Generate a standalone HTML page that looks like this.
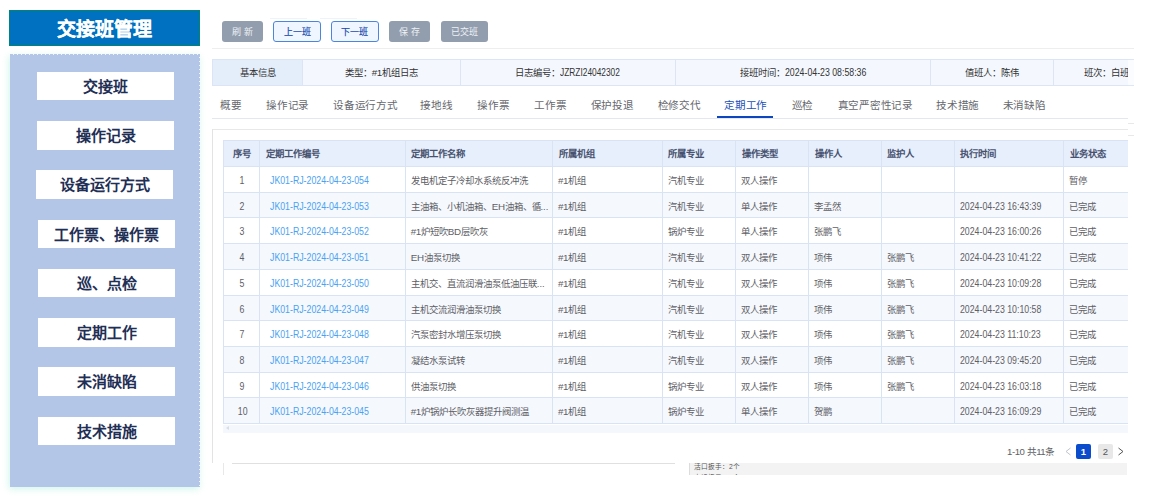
<!DOCTYPE html><html lang="zh-CN"><head><meta charset="utf-8"><style>
*{margin:0;padding:0;box-sizing:border-box}
html,body{width:1149px;height:499px;overflow:hidden;background:#fff;font-family:"Liberation Sans",sans-serif}
.a{position:absolute}
.hdr{left:9px;top:10px;width:191px;height:36px;background:#0070c0;border:1px solid #00856e;color:#fff;font-weight:bold;font-size:19px;line-height:37.6px;text-align:center;letter-spacing:0px;-webkit-text-stroke:0.25px #fff}
.panel{left:10px;top:54px;width:190px;height:433px;background:#b4c6e7;box-shadow:-1px 2px 7px rgba(150,235,210,.45)}
.dt{left:10px;top:54px;width:190px;height:1px;background:repeating-linear-gradient(to right,#b4c6e7 0 3px,#f4f6fb 3px 4px)}
.dr{left:199px;top:54px;width:1px;height:433px;background:repeating-linear-gradient(to bottom,#b4c6e7 0 3px,#f4f6fb 3px 4px)}
.nav{width:137px;background:#fff;color:#1f2f55;font-weight:bold;font-size:15px;line-height:29.5px;text-align:center}
.btn{top:21.2px;height:20.9px;border-radius:3px;font-size:9px;line-height:23.3px;text-align:center}
.g{background:#929eae;color:#eef1f5}
.o{background:#f0f6ff;border:1px solid #4a86dc;color:#1a4cb0;line-height:21.3px;-webkit-text-stroke:0.2px #1a4cb0}
.info{left:212px;top:59px;width:916px;height:26.5px;background:#f4f8fe;border:1px solid #dbe5f5;border-right:none;overflow:hidden}
.ic{top:0;height:24.5px;line-height:26.5px;font-size:9.4px;color:#333;text-align:center;border-right:1px solid #dbe5f5;white-space:nowrap}
.tab{top:98.3px;font-size:10.55px;letter-spacing:-0.25px;line-height:14px;color:#66686e;white-space:nowrap}
.tab.act{color:#1a50b8}
.hl{background:#e4e7ed;height:1px}
.cell{white-space:nowrap;overflow:hidden;font-size:9.4px;color:#5e6066;padding-left:4.5px}
.L{font-size:9.8px;letter-spacing:-0.45px}
.LS{display:inline-block;font-size:10.2px;transform:scaleX(.86);transform-origin:0 50%}
.LC{display:inline-block;font-size:10.2px;transform:scaleX(.86);transform-origin:50% 50%}
.th{font-weight:bold;color:#485270;padding-left:5.2px}
</style></head><body>
<div class="a hdr">交接班管理</div>
<div class="a panel"></div><div class="a dt"></div><div class="a dr"></div>
<div class="a nav" style="left:37px;top:72px;height:28px;line-height:29px">交接班</div>
<div class="a nav" style="left:37px;top:121px;height:29px;line-height:30px">操作记录</div>
<div class="a nav" style="left:36px;top:170px;height:29px;line-height:30px">设备运行方式</div>
<div class="a nav" style="left:38px;top:220px;height:28px;line-height:29px">工作票、操作票</div>
<div class="a nav" style="left:38px;top:269px;height:28px;line-height:29px">巡、点检</div>
<div class="a nav" style="left:38px;top:318px;height:29px;line-height:30px">定期工作</div>
<div class="a nav" style="left:38px;top:367px;height:29px;line-height:30px">未消缺陷</div>
<div class="a nav" style="left:38px;top:417px;height:28px;line-height:29px">技术措施</div>
<div class="a btn g" style="left:222px;width:41px">刷 新</div>
<div class="a btn o" style="left:273px;width:48px">上一班</div>
<div class="a btn o" style="left:331px;width:47.60000000000002px">下一班</div>
<div class="a btn g" style="left:389px;width:41px">保 存</div>
<div class="a btn g" style="left:441px;width:47px">已交班</div>
<div class="a" style="left:269.5px;top:18px;width:37.5px;height:1px;background:#eef3fa"></div><div class="a" style="left:319.5px;top:18px;width:37.5px;height:1px;background:#eef3fa"></div>
<div class="a hl" style="left:212px;top:48px;width:922px;background:#eeeeee"></div>
<div class="a info">
<div class="a ic" style="left:-0.4000000000000057px;width:90.39999999999998px;background:#e4eefb;"><span class="a" style="left:27.599999999999987px;top:0">基本信息</span></div>
<div class="a ic" style="left:89.99999999999997px;width:158.3px;"><span class="a" style="left:41.70000000000001px;top:0">类型：<span class="L">#1</span>机组日志</span></div>
<div class="a ic" style="left:248.29999999999998px;width:214.7px;"><span class="a" style="left:54.20000000000001px;top:0">日志编号：<span class="LS" style="transform:scaleX(.82)">JZRZI24042302</span></span></div>
<div class="a ic" style="left:463.0px;width:255.20000000000005px;"><span class="a" style="left:63.50000000000002px;top:0">接班时间：<span class="LS">2024-04-23 08:58:36</span></span></div>
<div class="a ic" style="left:718.2px;width:122.39999999999998px;"><span class="a" style="left:33.799999999999976px;top:0">值班人：陈伟</span></div>
<div class="a ic" style="left:840.6px;width:105px;border-right:none;"><span class="a" style="left:30.100000000000044px;top:0">班次：白班</span></div>
</div>
<div class="a" style="left:1128px;top:59px;width:6px;height:26.5px;border-top:1px solid #dde6f5;border-bottom:1px solid #dde6f5;background:#fbfcff"></div>
<div class="a" style="left:1128px;top:123px;width:6px;height:1px;background:#e8e8e8"></div>
<div class="a" style="left:1128px;top:135px;width:6px;height:1px;background:#e8e8e8"></div>
<div class="a tab" style="left:220px">概要</div>
<div class="a tab" style="left:266px">操作记录</div>
<div class="a tab" style="left:333px">设备运行方式</div>
<div class="a tab" style="left:420px">接地线</div>
<div class="a tab" style="left:477px">操作票</div>
<div class="a tab" style="left:534px">工作票</div>
<div class="a tab" style="left:590.7px">保护投退</div>
<div class="a tab" style="left:657.7px">检修交代</div>
<div class="a tab act" style="left:724px">定期工作</div>
<div class="a tab" style="left:791.5px">巡检</div>
<div class="a tab" style="left:837.5px">真空严密性记录</div>
<div class="a tab" style="left:936px">技术措施</div>
<div class="a tab" style="left:1002.5px">未消缺陷</div>
<div class="a" style="left:717px;top:116px;width:56px;height:2.6px;background:#0d47c0"></div>
<div class="a hl" style="left:212px;top:118px;width:916px"></div>
<div class="a hl" style="left:212px;top:129px;width:916px;background:#e8e8e8"></div>
<div class="a" style="left:212px;top:129px;width:1px;height:334px;background:#e3e3e3"></div>
<div class="a" style="left:223px;top:140px;width:904.5px;height:284.2px;border:1px solid #d8e3f4;border-right:none;overflow:hidden">
<div class="a" style="left:0;top:0;width:904.5px;height:25px;background:#e6effb"></div>
<div class="a" style="left:0;top:25.0px;width:904.5px;height:25.72px;background:#ffffff;border-top:1px solid #d8e3f4"></div>
<div class="a" style="left:0;top:50.72px;width:904.5px;height:25.72px;background:#f5f8fd;border-top:1px solid #d8e3f4"></div>
<div class="a" style="left:0;top:76.44px;width:904.5px;height:25.72px;background:#ffffff;border-top:1px solid #d8e3f4"></div>
<div class="a" style="left:0;top:102.16px;width:904.5px;height:25.72px;background:#f5f8fd;border-top:1px solid #d8e3f4"></div>
<div class="a" style="left:0;top:127.88px;width:904.5px;height:25.72px;background:#ffffff;border-top:1px solid #d8e3f4"></div>
<div class="a" style="left:0;top:153.6px;width:904.5px;height:25.72px;background:#f5f8fd;border-top:1px solid #d8e3f4"></div>
<div class="a" style="left:0;top:179.32px;width:904.5px;height:25.72px;background:#ffffff;border-top:1px solid #d8e3f4"></div>
<div class="a" style="left:0;top:205.04px;width:904.5px;height:25.72px;background:#f5f8fd;border-top:1px solid #d8e3f4"></div>
<div class="a" style="left:0;top:230.76px;width:904.5px;height:25.72px;background:#ffffff;border-top:1px solid #d8e3f4"></div>
<div class="a" style="left:0;top:256.48px;width:904.5px;height:25.72px;background:#f5f8fd;border-top:1px solid #d8e3f4"></div>
<div class="a" style="left:35.0px;top:0;width:1px;height:282.2px;background:#d8e3f4"></div>
<div class="a" style="left:180.8px;top:0;width:1px;height:282.2px;background:#d8e3f4"></div>
<div class="a" style="left:328.0px;top:0;width:1px;height:282.2px;background:#d8e3f4"></div>
<div class="a" style="left:437.5px;top:0;width:1px;height:282.2px;background:#d8e3f4"></div>
<div class="a" style="left:511.0px;top:0;width:1px;height:282.2px;background:#d8e3f4"></div>
<div class="a" style="left:583.9px;top:0;width:1px;height:282.2px;background:#d8e3f4"></div>
<div class="a" style="left:656.8px;top:0;width:1px;height:282.2px;background:#d8e3f4"></div>
<div class="a" style="left:729.8px;top:0;width:1px;height:282.2px;background:#d8e3f4"></div>
<div class="a" style="left:839.2px;top:0;width:1px;height:282.2px;background:#d8e3f4"></div>
<div class="a cell th" style="left:0px;top:0;width:36.5px;height:25px;line-height:26px;text-align:center;padding-left:0;">序号</div>
<div class="a cell th" style="left:36.5px;top:0;width:145.8px;height:25px;line-height:26px;">定期工作编号</div>
<div class="a cell th" style="left:182.3px;top:0;width:147.2px;height:25px;line-height:26px;">定期工作名称</div>
<div class="a cell th" style="left:329.5px;top:0;width:109.5px;height:25px;line-height:26px;">所属机组</div>
<div class="a cell th" style="left:439px;top:0;width:73.5px;height:25px;line-height:26px;">所属专业</div>
<div class="a cell th" style="left:512.5px;top:0;width:72.89999999999998px;height:25px;line-height:26px;">操作类型</div>
<div class="a cell th" style="left:585.4px;top:0;width:72.89999999999998px;height:25px;line-height:26px;">操作人</div>
<div class="a cell th" style="left:658.3px;top:0;width:73.0px;height:25px;line-height:26px;">监护人</div>
<div class="a cell th" style="left:731.3px;top:0;width:109.40000000000009px;height:25px;line-height:26px;">执行时间</div>
<div class="a cell th" style="left:840.7px;top:0;width:63.799999999999955px;height:25px;line-height:26px;">业务状态</div>
<div class="a cell" style="left:0px;top:25.0px;width:36.5px;height:25.72px;line-height:29.119999999999997px;text-align:center;padding-left:0;"><span class="LC">1</span></div>
<div class="a cell" style="left:36.5px;top:25.0px;width:145.8px;height:25.72px;line-height:29.119999999999997px;color:#4aa2f2;padding-left:9px;"><span class="LS">JK01-RJ-2024-04-23-054</span></div>
<div class="a cell" style="left:182.3px;top:25.0px;width:147.2px;height:25.72px;line-height:29.119999999999997px;">发电机定子冷却水系统反冲洗</div>
<div class="a cell" style="left:329.5px;top:25.0px;width:109.5px;height:25.72px;line-height:29.119999999999997px;"><span class="L">#1</span>机组</div>
<div class="a cell" style="left:439px;top:25.0px;width:73.5px;height:25.72px;line-height:29.119999999999997px;">汽机专业</div>
<div class="a cell" style="left:512.5px;top:25.0px;width:72.89999999999998px;height:25.72px;line-height:29.119999999999997px;">双人操作</div>
<div class="a cell" style="left:840.7px;top:25.0px;width:63.799999999999955px;height:25.72px;line-height:29.119999999999997px;">暂停</div>
<div class="a cell" style="left:0px;top:50.72px;width:36.5px;height:25.72px;line-height:29.119999999999997px;text-align:center;padding-left:0;"><span class="LC">2</span></div>
<div class="a cell" style="left:36.5px;top:50.72px;width:145.8px;height:25.72px;line-height:29.119999999999997px;color:#4aa2f2;padding-left:9px;"><span class="LS">JK01-RJ-2024-04-23-053</span></div>
<div class="a cell" style="left:182.3px;top:50.72px;width:147.2px;height:25.72px;line-height:29.119999999999997px;">主油箱、小机油箱、<span class="L">EH</span>油箱、循...</div>
<div class="a cell" style="left:329.5px;top:50.72px;width:109.5px;height:25.72px;line-height:29.119999999999997px;"><span class="L">#1</span>机组</div>
<div class="a cell" style="left:439px;top:50.72px;width:73.5px;height:25.72px;line-height:29.119999999999997px;">汽机专业</div>
<div class="a cell" style="left:512.5px;top:50.72px;width:72.89999999999998px;height:25.72px;line-height:29.119999999999997px;">单人操作</div>
<div class="a cell" style="left:585.4px;top:50.72px;width:72.89999999999998px;height:25.72px;line-height:29.119999999999997px;">李孟然</div>
<div class="a cell" style="left:731.3px;top:50.72px;width:109.40000000000009px;height:25.72px;line-height:29.119999999999997px;"><span class="LS">2024-04-23 16:43:39</span></div>
<div class="a cell" style="left:840.7px;top:50.72px;width:63.799999999999955px;height:25.72px;line-height:29.119999999999997px;">已完成</div>
<div class="a cell" style="left:0px;top:76.44px;width:36.5px;height:25.72px;line-height:29.119999999999997px;text-align:center;padding-left:0;"><span class="LC">3</span></div>
<div class="a cell" style="left:36.5px;top:76.44px;width:145.8px;height:25.72px;line-height:29.119999999999997px;color:#4aa2f2;padding-left:9px;"><span class="LS">JK01-RJ-2024-04-23-052</span></div>
<div class="a cell" style="left:182.3px;top:76.44px;width:147.2px;height:25.72px;line-height:29.119999999999997px;"><span class="L">#1</span>炉短吹<span class="L">BD</span>层吹灰</div>
<div class="a cell" style="left:329.5px;top:76.44px;width:109.5px;height:25.72px;line-height:29.119999999999997px;"><span class="L">#1</span>机组</div>
<div class="a cell" style="left:439px;top:76.44px;width:73.5px;height:25.72px;line-height:29.119999999999997px;">锅炉专业</div>
<div class="a cell" style="left:512.5px;top:76.44px;width:72.89999999999998px;height:25.72px;line-height:29.119999999999997px;">单人操作</div>
<div class="a cell" style="left:585.4px;top:76.44px;width:72.89999999999998px;height:25.72px;line-height:29.119999999999997px;">张鹏飞</div>
<div class="a cell" style="left:731.3px;top:76.44px;width:109.40000000000009px;height:25.72px;line-height:29.119999999999997px;"><span class="LS">2024-04-23 16:00:26</span></div>
<div class="a cell" style="left:840.7px;top:76.44px;width:63.799999999999955px;height:25.72px;line-height:29.119999999999997px;">已完成</div>
<div class="a cell" style="left:0px;top:102.16px;width:36.5px;height:25.72px;line-height:29.119999999999997px;text-align:center;padding-left:0;"><span class="LC">4</span></div>
<div class="a cell" style="left:36.5px;top:102.16px;width:145.8px;height:25.72px;line-height:29.119999999999997px;color:#4aa2f2;padding-left:9px;"><span class="LS">JK01-RJ-2024-04-23-051</span></div>
<div class="a cell" style="left:182.3px;top:102.16px;width:147.2px;height:25.72px;line-height:29.119999999999997px;"><span class="L">EH</span>油泵切换</div>
<div class="a cell" style="left:329.5px;top:102.16px;width:109.5px;height:25.72px;line-height:29.119999999999997px;"><span class="L">#1</span>机组</div>
<div class="a cell" style="left:439px;top:102.16px;width:73.5px;height:25.72px;line-height:29.119999999999997px;">汽机专业</div>
<div class="a cell" style="left:512.5px;top:102.16px;width:72.89999999999998px;height:25.72px;line-height:29.119999999999997px;">双人操作</div>
<div class="a cell" style="left:585.4px;top:102.16px;width:72.89999999999998px;height:25.72px;line-height:29.119999999999997px;">项伟</div>
<div class="a cell" style="left:658.3px;top:102.16px;width:73.0px;height:25.72px;line-height:29.119999999999997px;">张鹏飞</div>
<div class="a cell" style="left:731.3px;top:102.16px;width:109.40000000000009px;height:25.72px;line-height:29.119999999999997px;"><span class="LS">2024-04-23 10:41:22</span></div>
<div class="a cell" style="left:840.7px;top:102.16px;width:63.799999999999955px;height:25.72px;line-height:29.119999999999997px;">已完成</div>
<div class="a cell" style="left:0px;top:127.88px;width:36.5px;height:25.72px;line-height:29.119999999999997px;text-align:center;padding-left:0;"><span class="LC">5</span></div>
<div class="a cell" style="left:36.5px;top:127.88px;width:145.8px;height:25.72px;line-height:29.119999999999997px;color:#4aa2f2;padding-left:9px;"><span class="LS">JK01-RJ-2024-04-23-050</span></div>
<div class="a cell" style="left:182.3px;top:127.88px;width:147.2px;height:25.72px;line-height:29.119999999999997px;">主机交、直流润滑油泵低油压联...</div>
<div class="a cell" style="left:329.5px;top:127.88px;width:109.5px;height:25.72px;line-height:29.119999999999997px;"><span class="L">#1</span>机组</div>
<div class="a cell" style="left:439px;top:127.88px;width:73.5px;height:25.72px;line-height:29.119999999999997px;">汽机专业</div>
<div class="a cell" style="left:512.5px;top:127.88px;width:72.89999999999998px;height:25.72px;line-height:29.119999999999997px;">双人操作</div>
<div class="a cell" style="left:585.4px;top:127.88px;width:72.89999999999998px;height:25.72px;line-height:29.119999999999997px;">项伟</div>
<div class="a cell" style="left:658.3px;top:127.88px;width:73.0px;height:25.72px;line-height:29.119999999999997px;">张鹏飞</div>
<div class="a cell" style="left:731.3px;top:127.88px;width:109.40000000000009px;height:25.72px;line-height:29.119999999999997px;"><span class="LS">2024-04-23 10:09:28</span></div>
<div class="a cell" style="left:840.7px;top:127.88px;width:63.799999999999955px;height:25.72px;line-height:29.119999999999997px;">已完成</div>
<div class="a cell" style="left:0px;top:153.6px;width:36.5px;height:25.72px;line-height:29.119999999999997px;text-align:center;padding-left:0;"><span class="LC">6</span></div>
<div class="a cell" style="left:36.5px;top:153.6px;width:145.8px;height:25.72px;line-height:29.119999999999997px;color:#4aa2f2;padding-left:9px;"><span class="LS">JK01-RJ-2024-04-23-049</span></div>
<div class="a cell" style="left:182.3px;top:153.6px;width:147.2px;height:25.72px;line-height:29.119999999999997px;">主机交流润滑油泵切换</div>
<div class="a cell" style="left:329.5px;top:153.6px;width:109.5px;height:25.72px;line-height:29.119999999999997px;"><span class="L">#1</span>机组</div>
<div class="a cell" style="left:439px;top:153.6px;width:73.5px;height:25.72px;line-height:29.119999999999997px;">汽机专业</div>
<div class="a cell" style="left:512.5px;top:153.6px;width:72.89999999999998px;height:25.72px;line-height:29.119999999999997px;">双人操作</div>
<div class="a cell" style="left:585.4px;top:153.6px;width:72.89999999999998px;height:25.72px;line-height:29.119999999999997px;">项伟</div>
<div class="a cell" style="left:658.3px;top:153.6px;width:73.0px;height:25.72px;line-height:29.119999999999997px;">张鹏飞</div>
<div class="a cell" style="left:731.3px;top:153.6px;width:109.40000000000009px;height:25.72px;line-height:29.119999999999997px;"><span class="LS">2024-04-23 10:10:58</span></div>
<div class="a cell" style="left:840.7px;top:153.6px;width:63.799999999999955px;height:25.72px;line-height:29.119999999999997px;">已完成</div>
<div class="a cell" style="left:0px;top:179.32px;width:36.5px;height:25.72px;line-height:29.119999999999997px;text-align:center;padding-left:0;"><span class="LC">7</span></div>
<div class="a cell" style="left:36.5px;top:179.32px;width:145.8px;height:25.72px;line-height:29.119999999999997px;color:#4aa2f2;padding-left:9px;"><span class="LS">JK01-RJ-2024-04-23-048</span></div>
<div class="a cell" style="left:182.3px;top:179.32px;width:147.2px;height:25.72px;line-height:29.119999999999997px;">汽泵密封水增压泵切换</div>
<div class="a cell" style="left:329.5px;top:179.32px;width:109.5px;height:25.72px;line-height:29.119999999999997px;"><span class="L">#1</span>机组</div>
<div class="a cell" style="left:439px;top:179.32px;width:73.5px;height:25.72px;line-height:29.119999999999997px;">汽机专业</div>
<div class="a cell" style="left:512.5px;top:179.32px;width:72.89999999999998px;height:25.72px;line-height:29.119999999999997px;">双人操作</div>
<div class="a cell" style="left:585.4px;top:179.32px;width:72.89999999999998px;height:25.72px;line-height:29.119999999999997px;">项伟</div>
<div class="a cell" style="left:658.3px;top:179.32px;width:73.0px;height:25.72px;line-height:29.119999999999997px;">张鹏飞</div>
<div class="a cell" style="left:731.3px;top:179.32px;width:109.40000000000009px;height:25.72px;line-height:29.119999999999997px;"><span class="LS">2024-04-23 11:10:23</span></div>
<div class="a cell" style="left:840.7px;top:179.32px;width:63.799999999999955px;height:25.72px;line-height:29.119999999999997px;">已完成</div>
<div class="a cell" style="left:0px;top:205.04px;width:36.5px;height:25.72px;line-height:29.119999999999997px;text-align:center;padding-left:0;"><span class="LC">8</span></div>
<div class="a cell" style="left:36.5px;top:205.04px;width:145.8px;height:25.72px;line-height:29.119999999999997px;color:#4aa2f2;padding-left:9px;"><span class="LS">JK01-RJ-2024-04-23-047</span></div>
<div class="a cell" style="left:182.3px;top:205.04px;width:147.2px;height:25.72px;line-height:29.119999999999997px;">凝结水泵试转</div>
<div class="a cell" style="left:329.5px;top:205.04px;width:109.5px;height:25.72px;line-height:29.119999999999997px;"><span class="L">#1</span>机组</div>
<div class="a cell" style="left:439px;top:205.04px;width:73.5px;height:25.72px;line-height:29.119999999999997px;">汽机专业</div>
<div class="a cell" style="left:512.5px;top:205.04px;width:72.89999999999998px;height:25.72px;line-height:29.119999999999997px;">双人操作</div>
<div class="a cell" style="left:585.4px;top:205.04px;width:72.89999999999998px;height:25.72px;line-height:29.119999999999997px;">项伟</div>
<div class="a cell" style="left:658.3px;top:205.04px;width:73.0px;height:25.72px;line-height:29.119999999999997px;">张鹏飞</div>
<div class="a cell" style="left:731.3px;top:205.04px;width:109.40000000000009px;height:25.72px;line-height:29.119999999999997px;"><span class="LS">2024-04-23 09:45:20</span></div>
<div class="a cell" style="left:840.7px;top:205.04px;width:63.799999999999955px;height:25.72px;line-height:29.119999999999997px;">已完成</div>
<div class="a cell" style="left:0px;top:230.76px;width:36.5px;height:25.72px;line-height:29.119999999999997px;text-align:center;padding-left:0;"><span class="LC">9</span></div>
<div class="a cell" style="left:36.5px;top:230.76px;width:145.8px;height:25.72px;line-height:29.119999999999997px;color:#4aa2f2;padding-left:9px;"><span class="LS">JK01-RJ-2024-04-23-046</span></div>
<div class="a cell" style="left:182.3px;top:230.76px;width:147.2px;height:25.72px;line-height:29.119999999999997px;">供油泵切换</div>
<div class="a cell" style="left:329.5px;top:230.76px;width:109.5px;height:25.72px;line-height:29.119999999999997px;"><span class="L">#1</span>机组</div>
<div class="a cell" style="left:439px;top:230.76px;width:73.5px;height:25.72px;line-height:29.119999999999997px;">锅炉专业</div>
<div class="a cell" style="left:512.5px;top:230.76px;width:72.89999999999998px;height:25.72px;line-height:29.119999999999997px;">双人操作</div>
<div class="a cell" style="left:585.4px;top:230.76px;width:72.89999999999998px;height:25.72px;line-height:29.119999999999997px;">项伟</div>
<div class="a cell" style="left:658.3px;top:230.76px;width:73.0px;height:25.72px;line-height:29.119999999999997px;">张鹏飞</div>
<div class="a cell" style="left:731.3px;top:230.76px;width:109.40000000000009px;height:25.72px;line-height:29.119999999999997px;"><span class="LS">2024-04-23 16:03:18</span></div>
<div class="a cell" style="left:840.7px;top:230.76px;width:63.799999999999955px;height:25.72px;line-height:29.119999999999997px;">已完成</div>
<div class="a cell" style="left:0px;top:256.48px;width:36.5px;height:25.72px;line-height:29.119999999999997px;text-align:center;padding-left:0;"><span class="LC">10</span></div>
<div class="a cell" style="left:36.5px;top:256.48px;width:145.8px;height:25.72px;line-height:29.119999999999997px;color:#4aa2f2;padding-left:9px;"><span class="LS">JK01-RJ-2024-04-23-045</span></div>
<div class="a cell" style="left:182.3px;top:256.48px;width:147.2px;height:25.72px;line-height:29.119999999999997px;"><span class="L">#1</span>炉锅炉长吹灰器提升阀测温</div>
<div class="a cell" style="left:329.5px;top:256.48px;width:109.5px;height:25.72px;line-height:29.119999999999997px;"><span class="L">#1</span>机组</div>
<div class="a cell" style="left:439px;top:256.48px;width:73.5px;height:25.72px;line-height:29.119999999999997px;">锅炉专业</div>
<div class="a cell" style="left:512.5px;top:256.48px;width:72.89999999999998px;height:25.72px;line-height:29.119999999999997px;">单人操作</div>
<div class="a cell" style="left:585.4px;top:256.48px;width:72.89999999999998px;height:25.72px;line-height:29.119999999999997px;">贺鹏</div>
<div class="a cell" style="left:731.3px;top:256.48px;width:109.40000000000009px;height:25.72px;line-height:29.119999999999997px;"><span class="LS">2024-04-23 16:09:29</span></div>
<div class="a cell" style="left:840.7px;top:256.48px;width:63.799999999999955px;height:25.72px;line-height:29.119999999999997px;">已完成</div>
</div>
<div class="a" style="left:223px;top:424.5px;width:904.5px;height:8px;background:#f4f7fc"></div>
<div class="a" style="left:225.5px;top:426px;width:0;height:0;border-top:2.5px solid transparent;border-bottom:2.5px solid transparent;border-right:3.5px solid #d8dde6"></div>
<div class="a" style="left:1007px;top:445px;font-size:9.6px;line-height:13px;color:#606266;white-space:nowrap;letter-spacing:-0.45px">1-10 共11条</div>
<svg class="a" style="left:1064px;top:447px" width="8" height="9"><polyline points="6.5,1 2,4.5 6.5,8" fill="none" stroke="#c0c4cc" stroke-width="1"/></svg>
<div class="a" style="left:1076px;top:444px;width:15px;height:15px;border-radius:2px;background:#0a4ccc;color:#fff;font-weight:bold;font-size:9.5px;line-height:15px;text-align:center">1</div>
<div class="a" style="left:1098px;top:444px;width:15px;height:15px;border-radius:2px;background:#e8e8e8;color:#555;font-size:9.5px;line-height:15px;text-align:center">2</div>
<svg class="a" style="left:1117px;top:447px" width="8" height="9"><polyline points="1.5,1 6,4.5 1.5,8" fill="none" stroke="#555" stroke-width="1"/></svg>
<div class="a hl" style="left:231.5px;top:463px;width:443px;background:#e0e0e0"></div>
<div class="a" style="left:223px;top:463px;width:1px;height:12px;background:#e8e8e8"></div>
<div class="a" style="left:689px;top:463px;width:438px;height:12px;background:#f3f3f3;border-left:1px solid #dcdcdc;overflow:hidden"><div style="padding-left:4px;margin-top:-2.5px;font-size:6.7px;line-height:11px;color:#555;white-space:nowrap">活口扳手：2个<br>大锤扳子：1个</div></div>
</body></html>
